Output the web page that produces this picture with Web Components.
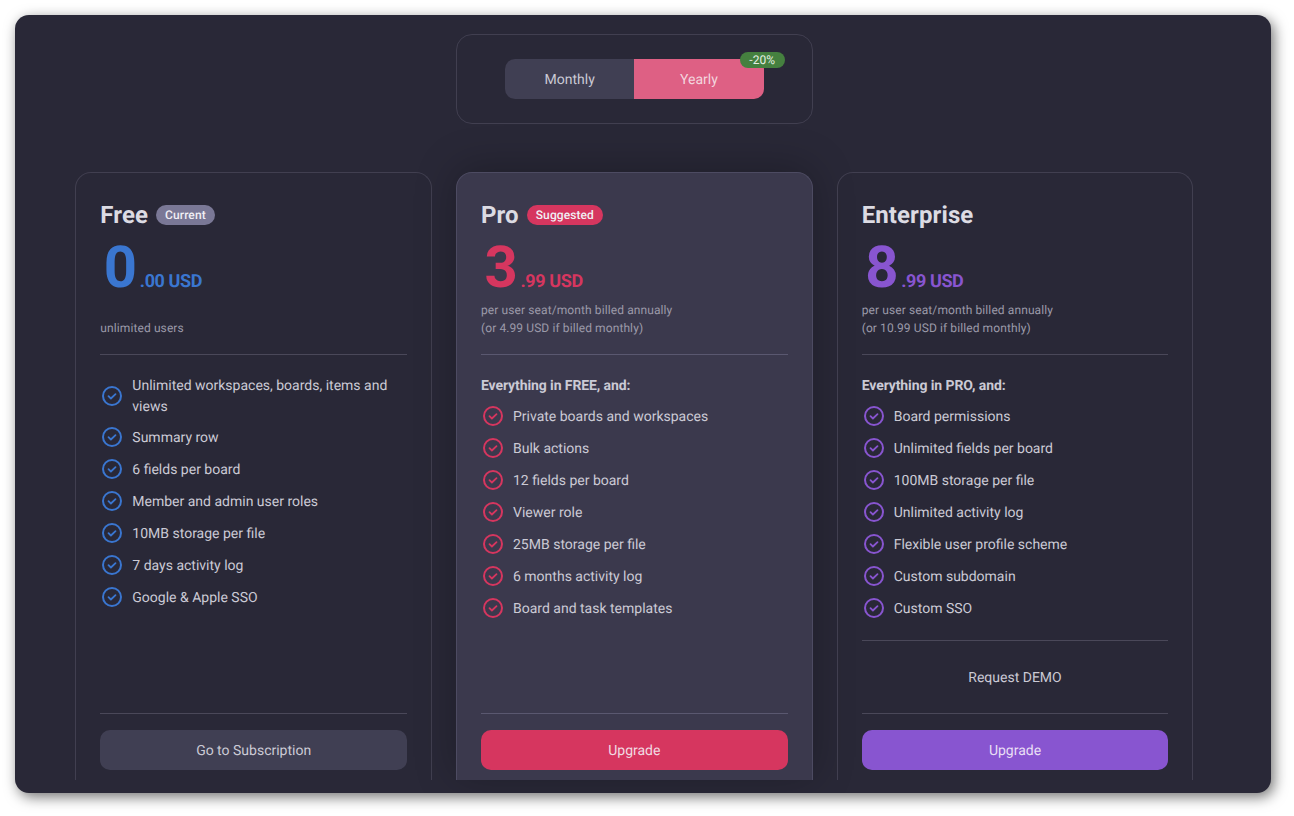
<!DOCTYPE html>
<html lang="en">
<head>
<meta charset="utf-8">
<title>Plans</title>
<style>
  html, body { margin: 0; background: #fff; }
  body { padding: 15px 23px 23px 15px; font-family: Roboto, "Liberation Sans", sans-serif; text-rendering: geometricPrecision; }
</style>
</head>
<body>
<plan-window>
  <billing-toggle slot="toggle"></billing-toggle>
  <plan-card name="Free" badge="Current" badge-color="#7a7896" digit="0" cents=".00 USD" accent="#3a76d0"
    note="&nbsp;|unlimited users" button="Go to Subscription" button-color="#403f53" button-text="#cbcad5">
    <plan-feature style="margin:-1px 0">Unlimited workspaces, boards, items and views</plan-feature>
    <plan-feature>Summary row</plan-feature>
    <plan-feature>6 fields per board</plan-feature>
    <plan-feature>Member and admin user roles</plan-feature>
    <plan-feature>10MB storage per file</plan-feature>
    <plan-feature>7 days activity log</plan-feature>
    <plan-feature>Google &amp; Apple SSO</plan-feature>
  </plan-card>
  <plan-card featured name="Pro" badge="Suggested" badge-color="#d6365f" digit="3" cents=".99 USD" accent="#d6365f"
    note="per user seat/month billed annually|(or 4.99 USD if billed monthly)" lead="Everything in FREE, and:" button="Upgrade" button-color="#d6365f" button-text="#f1dbe2">
    <plan-feature>Private boards and workspaces</plan-feature>
    <plan-feature>Bulk actions</plan-feature>
    <plan-feature>12 fields per board</plan-feature>
    <plan-feature>Viewer role</plan-feature>
    <plan-feature>25MB storage per file</plan-feature>
    <plan-feature>6 months activity log</plan-feature>
    <plan-feature>Board and task templates</plan-feature>
  </plan-card>
  <plan-card name="Enterprise" digit="8" cents=".99 USD" accent="#8855d0"
    note="per user seat/month billed annually|(or 10.99 USD if billed monthly)" lead="Everything in PRO, and:" extra="Request DEMO" button="Upgrade" button-color="#8855d0" button-text="#e8dff5">
    <plan-feature>Board permissions</plan-feature>
    <plan-feature>Unlimited fields per board</plan-feature>
    <plan-feature>100MB storage per file</plan-feature>
    <plan-feature>Unlimited activity log</plan-feature>
    <plan-feature>Flexible user profile scheme</plan-feature>
    <plan-feature>Custom subdomain</plan-feature>
    <plan-feature>Custom SSO</plan-feature>
  </plan-card>
</plan-window>

<script>
class PlanWindow extends HTMLElement {
  constructor() {
    super();
    this.attachShadow({ mode: "open" });
  }

  connectedCallback() {
    this.shadowRoot.innerHTML = `
      <style>
        :host {
          display: block;
          box-sizing: border-box;
          width: 1256px;
          height: 778px;
          padding: 19px 77.67px 13px 60.33px;
          background: #292837;
          border-radius: 14px;
          box-shadow: 3px 4px 14px rgba(0, 0, 0, 0.55);
          overflow: hidden;
        }
        .top { display: flex; justify-content: center; margin-bottom: 48px; }
        .plans { display: grid; grid-template-columns: 1fr 1fr 1fr; gap: 24px; height: 608px; }
      </style>
      <div class="top"><slot name="toggle"></slot></div>
      <div class="plans"><slot></slot></div>
    `;
  }
}

class BillingToggle extends HTMLElement {
  constructor() {
    super();
    this.attachShadow({ mode: "open" });
  }

  connectedCallback() {
    this.shadowRoot.innerHTML = `
      <style>
        :host {
          display: flex;
          justify-content: center;
          align-items: center;
          box-sizing: border-box;
          width: 356.67px;
          height: 90px;
          border: 1px solid #413f50;
          border-radius: 16px;
        }
        .switch { position: relative; display: flex; width: 258.67px; height: 40px; font-size: 14px; }
        .switch div { flex: 1; display: flex; align-items: center; justify-content: center; box-sizing: border-box; padding-top: 2px; }
        .monthly { background: #403f53; color: #cbcad5; border-radius: 10px 0 0 10px; }
        .yearly { background: #de6084; color: #f3d5de; border-radius: 0 10px 10px 0; }
        .switch .off {
          position: absolute;
          top: -7px;
          right: -21px;
          width: 45px;
          height: 16px;
          padding-top: 0;
          border-radius: 8px;
          background: #45803f;
          color: #e4efe2;
          font-size: 12px;
        }
      </style>
      <div class="switch">
        <div class="monthly">Monthly</div>
        <div class="yearly">Yearly</div>
        <div class="off">-20%</div>
      </div>
    `;
  }
}

class PlanCard extends HTMLElement {
  constructor() {
    super();
    this.attachShadow({ mode: "open" });
  }

  Render() {
    const attr = (n) => this.getAttribute(n);
    const accent = attr("accent");
    const note = attr("note").split("|").map((l) => `<div>${l}</div>`).join("");
    const badge = attr("badge")
      ? `<span class="badge" style="background:${attr("badge-color")}">${attr("badge")}</span>`
      : "";
    const lead = attr("lead") ? `<div class="lead">${attr("lead")}</div>` : "";
    const extra = attr("extra") ? `<div class="extra">${attr("extra")}</div>` : "";
    return `
      <style>
        :host {
          display: flex;
          flex-direction: column;
          box-sizing: border-box;
          height: 608px;
          padding: 24px 24px 10px 24px;
          border: 1px solid #413f50;
          border-bottom: 0;
          border-radius: 16px 16px 0 0;
          --accent: ${accent};
          color: #cbcad5;
        }
        :host([featured]) {
          background: #3b394d;
          border-color: #4d4b62;
          box-shadow: 0 -4px 40px rgba(0, 0, 0, 0.25);
        }
        .title { display: flex; align-items: center; gap: 8px; height: 36px; }
        .name { font-size: 24px; font-weight: 700; line-height: 36px; color: #dcdbe3; letter-spacing: 0.1px; }
        .badge {
          display: block;
          padding: 0 9px;
          height: 20px;
          line-height: 21px;
          border-radius: 10px;
          font-size: 12px;
          font-weight: 500;
          letter-spacing: 0.1px;
          color: #f0eff4;
        }
        .price { display: flex; align-items: baseline; height: 56px; margin: 7px 0 -7px 3.5px; color: var(--accent); font-weight: 700; }
        .digit { font-size: 58px; line-height: 56px; width: 36px; }
        .cents { font-size: 18px; letter-spacing: -0.4px; }
        .note { margin-top: 12px; font-size: 12px; line-height: 18px; letter-spacing: 0.1px; color: #9b9aa9; }
        hr { width: 100%; margin: 0; border: 0; height: 1px; background: #4a4859; flex: none; }
        :host([featured]) hr { background: #5a5870; }
        .head { height: 157px; }
        .body { padding-top: 20px; flex: 1; }
        .lead { font-size: 14px; font-weight: 700; line-height: 21px; padding-top: 1px; margin-bottom: 8px; letter-spacing: -0.1px; }
        .list { display: flex; flex-direction: column; gap: 10px; }
        .extra { box-sizing: border-box; height: 72px; padding-top: 2px; display: flex; align-items: center; justify-content: center; font-size: 14px; }
        .foot { padding-top: 16px; }
        .btn {
          display: flex;
          align-items: center;
          justify-content: center;
          box-sizing: border-box;
          height: 40px;
          padding-top: 2px;
          border-radius: 10px;
          font-size: 14px;
        }
      </style>
      <div class="head">
        <div class="title"><span class="name">${attr("name")}</span>${badge}</div>
        <div class="price"><span class="digit">${attr("digit")}</span><span class="cents">${attr("cents")}</span></div>
        <div class="note">${note}</div>
      </div>
      <hr>
      <div class="body">
        ${lead}
        <div class="list"><slot></slot></div>
      </div>
      ${extra ? `<hr>${extra}` : ""}
      <hr>
      <div class="foot">
        <div class="btn" style="background:${attr("button-color")};color:${attr("button-text")}">${attr("button")}</div>
      </div>
    `;
  }

  connectedCallback() {
    this.shadowRoot.innerHTML = this.Render();
  }
}

class PlanFeature extends HTMLElement {
  constructor() {
    super();
    this.attachShadow({ mode: "open" });
  }

  connectedCallback() {
    this.shadowRoot.innerHTML = `
      <style>
        :host {
          display: flex;
          align-items: center;
          gap: 8px;
          font-size: 14px;
          line-height: 21px;
          color: #cbcad5;
        }
        svg { flex: none; width: 24px; height: 22px; }
        span { display: block; padding-top: 2px; margin-bottom: -1px; }
      </style>
      <svg viewBox="0 0 24 22" fill="none" stroke="var(--accent)" stroke-width="2" stroke-linecap="round" stroke-linejoin="round">
        <circle cx="12" cy="11" r="9"/>
        <path d="M8.5 11.2l2.4 2.3 4.6-4.4" stroke-width="1.8"/>
      </svg>
      <span><slot></slot></span>
    `;
  }
}

window.customElements.define("plan-window", PlanWindow);
window.customElements.define("billing-toggle", BillingToggle);
window.customElements.define("plan-card", PlanCard);
window.customElements.define("plan-feature", PlanFeature);
</script>
</body>
</html>
